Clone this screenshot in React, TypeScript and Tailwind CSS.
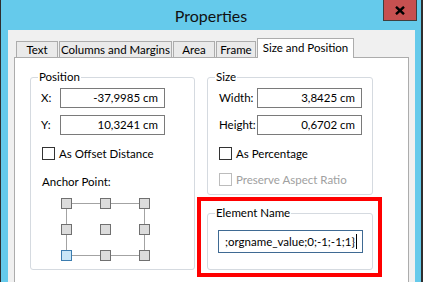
import React from 'react';

const tabs = [
  { label: 'Text', w: 'w-[42px]' },
  { label: 'Columns and Margins', w: 'w-[113px]' },
  { label: 'Area', w: 'w-[42px]' },
  { label: 'Frame', w: 'w-[40px]' },
];

function Checkbox({ label, disabled }: { label: string; disabled?: boolean }) {
  return (
    <div className="flex items-center h-[13px]">
      <span
        className={[
          'w-[13px] h-[13px] border bg-white shrink-0',
          disabled ? 'border-[#BCBCBC]' : 'border-[#333333]',
        ].join(' ')}
      />
      <span className={['ml-[4px] leading-[15px]', disabled ? 'text-[#A0A0A0]' : 'text-black'].join(' ')}>
        {label}
      </span>
    </div>
  );
}

function Field({ label, value, labelW }: { label: string; value: string; labelW: string }) {
  return (
    <div className="flex items-center">
      <span className={labelW}>{label}</span>
      <div className="w-[105px] h-[20px] border border-[#7A7A7A] bg-white flex items-center justify-end pr-[6px] leading-none">
        {value}
      </div>
    </div>
  );
}

function Group({ title, className, children }: { title: string; className: string; children: React.ReactNode }) {
  return (
    <div className={'relative border border-[#D5DAE0] rounded-[3px] ' + className}>
      <span className="absolute top-[-9px] left-[7px] px-[1px] bg-white leading-[16px]">{title}</span>
      {children}
    </div>
  );
}

function AnchorGrid() {
  const pos = [0.5, 39.5, 78.5];
  const rows = [0.5, 26.5, 52.5];
  return (
    <svg width="90" height="64" className="block">
      <g stroke="#A3A3A3" strokeWidth="1">
        <line x1="11" y1="5.5" x2="39" y2="5.5" />
        <line x1="50" y1="5.5" x2="78" y2="5.5" />
        <line x1="11" y1="57.5" x2="39" y2="57.5" />
        <line x1="50" y1="57.5" x2="78" y2="57.5" />
        <line x1="5.5" y1="11" x2="5.5" y2="26" />
        <line x1="5.5" y1="37" x2="5.5" y2="52" />
        <line x1="83.5" y1="11" x2="83.5" y2="26" />
        <line x1="83.5" y1="37" x2="83.5" y2="52" />
      </g>
      {rows.map((y, r) =>
        pos.map((x, c) => {
          const sel = r === 2 && c === 0;
          return (
            <rect
              key={r + '-' + c}
              x={x}
              y={y}
              width="10"
              height="10"
              fill={sel ? '#C9E6F7' : '#DCDCDC'}
              stroke={sel ? '#3C7DB0' : '#707070'}
              strokeWidth="1"
            />
          );
        })
      )}
    </svg>
  );
}

export default function App() {
  return (
    <div
      className="w-[423px] h-[282px] overflow-hidden bg-[#65CAEB] border-l border-r-2 border-[#2E2E2E] flex flex-col text-[11.5px] text-black"
      style={{ fontFamily: "Lato, 'Liberation Sans', sans-serif" }}
    >
      {/* Title bar */}
      <div className="relative h-[30px] shrink-0 flex items-center justify-center">
        <span className="text-[16px] text-[#111111] leading-none mt-[1px]">Properties</span>
        <div className="absolute top-0 left-[382px] w-[34px] h-[21px] bg-[#C75050] border border-t-0 border-[#3F3F3F] flex items-center justify-center">
          <svg width="10" height="9" viewBox="0 0 10 9">
            <path d="M1 0.8 L9 8.2 M9 0.8 L1 8.2" stroke="#000" strokeWidth="2.4" />
          </svg>
        </div>
      </div>

      {/* Dialog body */}
      <div className="flex-1 ml-[7px] mr-[6px] bg-[#F0F0F0] flex flex-col">
        {/* Tabs */}
        <div className="flex items-end pt-[8px] pl-[8px] h-[27px] shrink-0">
          {tabs.map((t) => (
            <div
              key={t.label}
              className={t.w + ' h-[16px] mr-[1px] bg-[#EAEAEA] border border-b-0 border-[#ACACAC] flex items-center justify-center leading-none whitespace-nowrap'}
            >
              {t.label}
            </div>
          ))}
          <div className="relative z-10 w-[97px] h-[20px] mb-[-1px] bg-white border border-b-0 border-[#ACACAC] flex items-start justify-center pt-[3px] leading-none whitespace-nowrap">
            Size and Position
          </div>
        </div>

        {/* Tab panel */}
        <div className="relative flex-1 ml-[6px] w-[395px] bg-white border border-b-0 border-[#ACACAC] pl-[15px] pt-[19px] flex gap-[12px]">
          <Group title="Position" className="w-[165px] h-[193px] pl-[10px] pt-[10px] flex flex-col">
            <Field label="X:" value="-37,9985 cm" labelW="w-[19px]" />
            <div className="h-[7px]" />
            <Field label="Y:" value="10,3241 cm" labelW="w-[19px]" />
            <div className="mt-[12px] ml-[1px]">
              <Checkbox label="As Offset Distance" />
            </div>
            <div className="mt-[14px] ml-[1px] leading-[16px]">Anchor Point:</div>
            <div className="mt-[8px] ml-[20px]">
              <AnchorGrid />
            </div>
          </Group>

          <div className="flex flex-col">
            <Group title="Size" className="w-[166px] h-[118px] pl-[10px] pt-[10px] flex flex-col">
              <Field label="Width:" value="3,8425 cm" labelW="w-[39px] pl-[1px]" />
              <div className="h-[7px]" />
              <Field label="Height:" value="0,6702 cm" labelW="w-[39px] pl-[1px]" />
              <div className="mt-[12px] ml-[1px]">
                <Checkbox label="As Percentage" />
              </div>
              <div className="mt-[13px] ml-[1px]">
                <Checkbox label="Preserve Aspect Ratio" disabled />
              </div>
            </Group>
            <Group title="Element Name" className="mt-[18px] w-[166px] h-[57px] pl-[10px] pt-[16px]">
              <div className="w-[145px] h-[23px] border border-[#3F6A93] bg-white flex items-center pl-[6px] leading-none whitespace-nowrap overflow-hidden">
                <span>{';orgname_value;0;-1;-1;1}'}</span>
                <span className="w-px h-[15px] bg-black ml-[1px]" />
              </div>
            </Group>
          </div>

          {/* Highlight annotation */}
          <div className="absolute left-[182px] top-[139px] w-[185px] h-[80px] border-4 border-[#FF0000] pointer-events-none" />
        </div>
      </div>
    </div>
  );
}
